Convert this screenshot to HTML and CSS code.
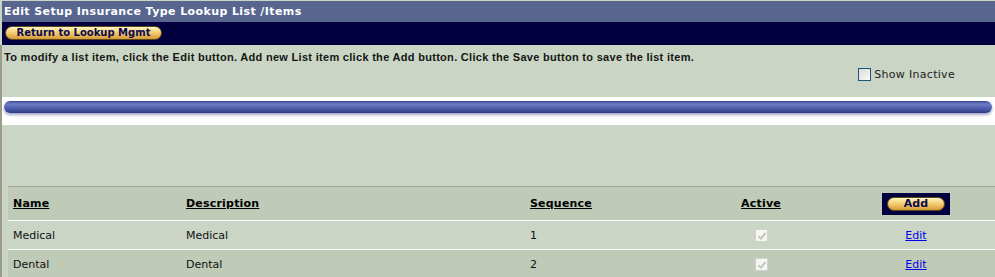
FILE: index.html
```html
<!DOCTYPE html>
<html lang="en">
<head>
    <meta charset="UTF-8">
    <title>Edit Setup Insurance Type Lookup List</title>
    <link rel="stylesheet" href="styles.css">
</head>
<body>
    <div class="title">Edit Setup Insurance Type Lookup List /Items</div>
    <div class="nav">
        <button class="pill return">Return to Lookup Mgmt</button>
    </div>
    <div class="content">
        <p class="intro">To modify a list item, click the Edit button. Add new List item click the Add button. Click the Save button to save the list item.</p>
        <div class="options">
            <label class="show"><span class="chk"></span>Show Inactive</label>
        </div>
        <div class="divider">
            <div class="tube"></div>
        </div>

        <table class="items">
            <colgroup>
                <col class="c-name">
                <col class="c-desc">
                <col class="c-seq">
                <col class="c-active">
                <col class="c-edit">
            </colgroup>
            <tr class="head">
                <th><span class="sort">Name</span></th>
                <th><span class="sort">Description</span></th>
                <th><span class="sort">Sequence</span></th>
                <th class="center"><span class="sort">Active</span></th>
                <th class="center"><span class="addbox"><button class="pill add">Add</button></span></th>
            </tr>
            <tr class="odd">
                <td>Medical</td>
                <td>Medical</td>
                <td>1</td>
                <td class="center"><span class="tick"><svg width="10" height="10" viewBox="0 0 10 10"><path d="M1.5 5.2 L4 7.6 L8.6 1.8" fill="none" stroke="#c3c6bd" stroke-width="2"/></svg></span></td>
                <td class="center"><a href="#">Edit</a></td>
            </tr>
            <tr class="even">
                <td>Dental</td>
                <td>Dental</td>
                <td>2</td>
                <td class="center"><span class="tick"><svg width="10" height="10" viewBox="0 0 10 10"><path d="M1.5 5.2 L4 7.6 L8.6 1.8" fill="none" stroke="#c3c6bd" stroke-width="2"/></svg></span></td>
                <td class="center"><a href="#">Edit</a></td>
            </tr>
        </table>
    </div>
</body>
</html>
```

FILE: styles.css
```css
* {
    margin: 0;
    padding: 0;
    box-sizing: border-box;
}

body {
    background-color: #cad5c5;
    font-family: "DejaVu Sans", Verdana, sans-serif;
    font-size: 11px;
    color: #111;
    overflow: hidden;
}

.title {
    margin-left: 2px;
    margin-top: 1px;
    height: 21px;
    line-height: 21px;
    padding-left: 2px;
    background-color: #58668f;
    color: #fff;
    font-weight: bold;
    letter-spacing: 0.4px;
}

.nav {
    margin-left: 2px;
    height: 23px;
    padding: 4px 3px;
    background-color: #030040;
}

.pill {
    display: block;
    height: 14px;
    border: 1px solid #5e4716;
    border-radius: 8px;
    background: linear-gradient(#fff6c4 0%, #f8dc8c 30%, #eec162 60%, #d49a3a 100%);
    color: #0a0a50;
    font-family: "DejaVu Sans", Verdana, sans-serif;
    font-weight: bold;
    font-size: 10px;
    line-height: 12px;
    text-align: center;
}

.return {
    width: 157px;
}

.content {
    border-left: 2px solid #9d9a8a;
}

.intro {
    padding: 5px 0 0 2px;
    line-height: 15px;
    font-family: "Liberation Sans", Arial, sans-serif;
    font-weight: bold;
    font-size: 11px;
    letter-spacing: 0.3px;
    color: #151515;
}

.options {
    display: flex;
    justify-content: flex-end;
    padding: 0 40px 0 0;
    height: 32px;
}

.show {
    display: flex;
    align-items: center;
    gap: 3px;
    color: #222;
    height: 18px;
    letter-spacing: 0.3px;
}

.chk {
    width: 13px;
    height: 13px;
    border: 1px solid #1d5283;
    background: linear-gradient(135deg, #dcdcd4, #fafaf8);
}

.divider {
    height: 28px;
    padding: 4px 3px 0 2px;
    background-color: #fff;
}

.tube {
    height: 12px;
    border-radius: 6px;
    background: linear-gradient(#3a4892 0%, #6e7ec6 25%, #5868b4 50%, #43519c 78%, #2a367e 100%);
    box-shadow: 0 2px 3px rgba(50, 60, 130, 0.45);
}

.items {
    margin: 61px 0 0 6px;
    width: 987px;
    table-layout: fixed;
    border-collapse: collapse;
    border-top: 1px solid #a8a797;
}

.c-name { width: 173px; }
.c-desc { width: 344px; }
.c-seq { width: 160px; }
.c-active { width: 152px; }
.c-edit { width: 158px; }

.items th,
.items td {
    padding-left: 5px;
    text-align: left;
    vertical-align: middle;
}

.items .center {
    text-align: center;
    padding-left: 0;
}

.head {
    height: 34px;
    background-color: #bfcbb7;
}

.head th {
    font-weight: bold;
    color: #000;
    letter-spacing: 0.2px;
}

.sort {
    text-decoration: underline;
}

.addbox {
    display: inline-block;
    padding: 4px 5px;
    background-color: #030040;
    vertical-align: middle;
}

.add {
    width: 58px;
    font-size: 11px;
}

.odd {
    height: 29px;
    background-color: #cad5c5;
    border-top: 1px solid #fff;
}

.even {
    height: 29px;
    background-color: #bfcbb7;
    border-top: 1px solid #fff;
}

.tick {
    display: inline-block;
    width: 13px;
    height: 13px;
    border: 1px solid #cfd2ca;
    background-color: #f6f6f3;
    vertical-align: middle;
    line-height: 10px;
}

.tick svg {
    display: block;
    margin: 1px;
}

a {
    color: #0000ee;
    text-decoration: underline;
}
```
